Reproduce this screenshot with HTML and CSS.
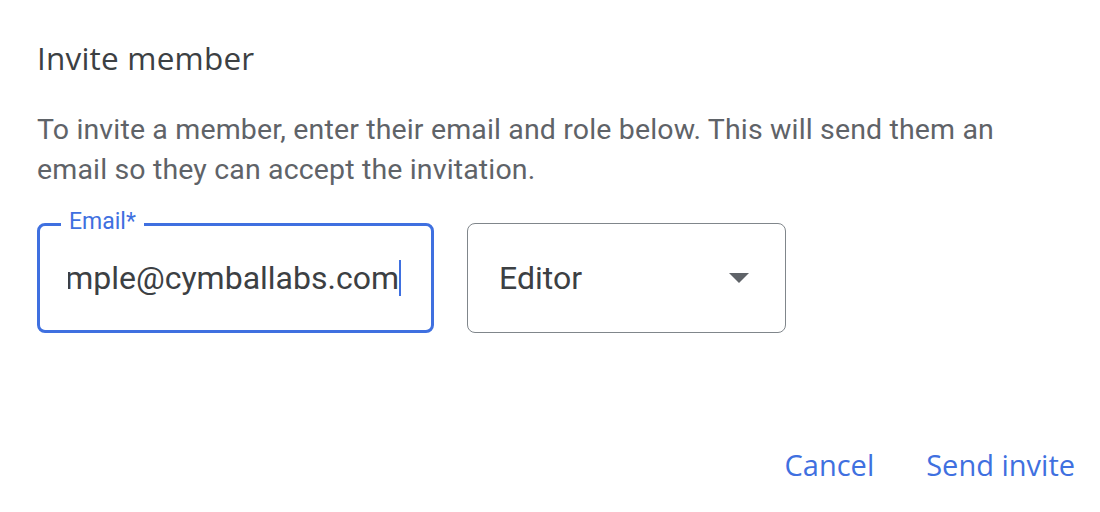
FILE: index.html
```html
<!DOCTYPE html>
<html>
<head>
<meta charset="utf-8">
<link rel="stylesheet" href="styles.css">
</head>
<body>
<div class="dialog">
  <h1 class="title">Invite member</h1>
  <p class="desc">To invite a member, enter their email and role below. This will send them an email so they can accept the invitation.</p>
  <div class="fields">
    <div class="field email">
      <span class="label">Email*</span>
      <div class="value-wrap"><span class="value">example@cymballabs.com</span><span class="caret"></span></div>
    </div>
    <div class="field select">
      <span class="select-value">Editor</span>
      <span class="arrow"></span>
    </div>
  </div>
  <div class="actions">
    <button class="btn">Cancel</button>
    <button class="btn">Send invite</button>
  </div>
</div>
</body>
</html>
```
FILE: styles.css
```css
html, body {
  margin: 0;
  padding: 0;
  background: #fff;
}
.dialog {
  width: 1100px;
  height: 512px;
  box-sizing: border-box;
  padding: 35px 25px 0 37px;
  display: flex;
  flex-direction: column;
  font-family: Roboto, "Liberation Sans", sans-serif;
}
.title {
  margin: 0;
  font-family: "Open Sans", Roboto, sans-serif;
  font-weight: 500;
  font-size: 31.5px;
  line-height: 46px;
  color: #3c4043;
  letter-spacing: 0.2px;
}
.desc {
  margin: 29px 0 0 0;
  width: 990px;
  font-size: 28.5px;
  line-height: 40px;
  color: #5f6368;
  letter-spacing: 0.15px;
}
.fields {
  margin-top: 33px;
  display: flex;
  gap: 33px;
}
.field {
  position: relative;
  box-sizing: border-box;
  height: 110px;
  border-radius: 8px;
  display: flex;
  align-items: center;
}
.email {
  width: 397px;
  border: 3px solid #3f70e0;
  padding: 0 30px 0 28px;
}
.label {
  position: absolute;
  top: -17px;
  left: 21px;
  padding: 0 8px;
  background: #fff;
  color: #3f70e0;
  font-size: 23px;
  line-height: 26px;
}
.value-wrap {
  flex: 1;
  overflow: hidden;
  display: flex;
  justify-content: flex-end;
  align-items: center;
  white-space: nowrap;
}
.value {
  font-size: 32px;
  color: #3c4043;
}
.caret {
  flex: none;
  width: 2px;
  height: 36px;
  background: #3f70e0;
}
.select {
  width: 319px;
  border: 1.5px solid #80868b;
  padding: 0 36px 0 31px;
  justify-content: space-between;
}
.select-value {
  font-size: 32px;
  color: #3c4043;
}
.arrow {
  width: 0;
  height: 0;
  border-left: 10px solid transparent;
  border-right: 10px solid transparent;
  border-top: 10px solid #5f6368;
}
.actions {
  margin-top: 114px;
  display: flex;
  justify-content: flex-end;
  gap: 52px;
}
.btn {
  border: none;
  background: none;
  padding: 0;
  font-family: "Open Sans", Roboto, sans-serif;
  font-size: 29px;
  font-weight: 500;
  color: #3f70e0;
  line-height: 36px;
}
```
